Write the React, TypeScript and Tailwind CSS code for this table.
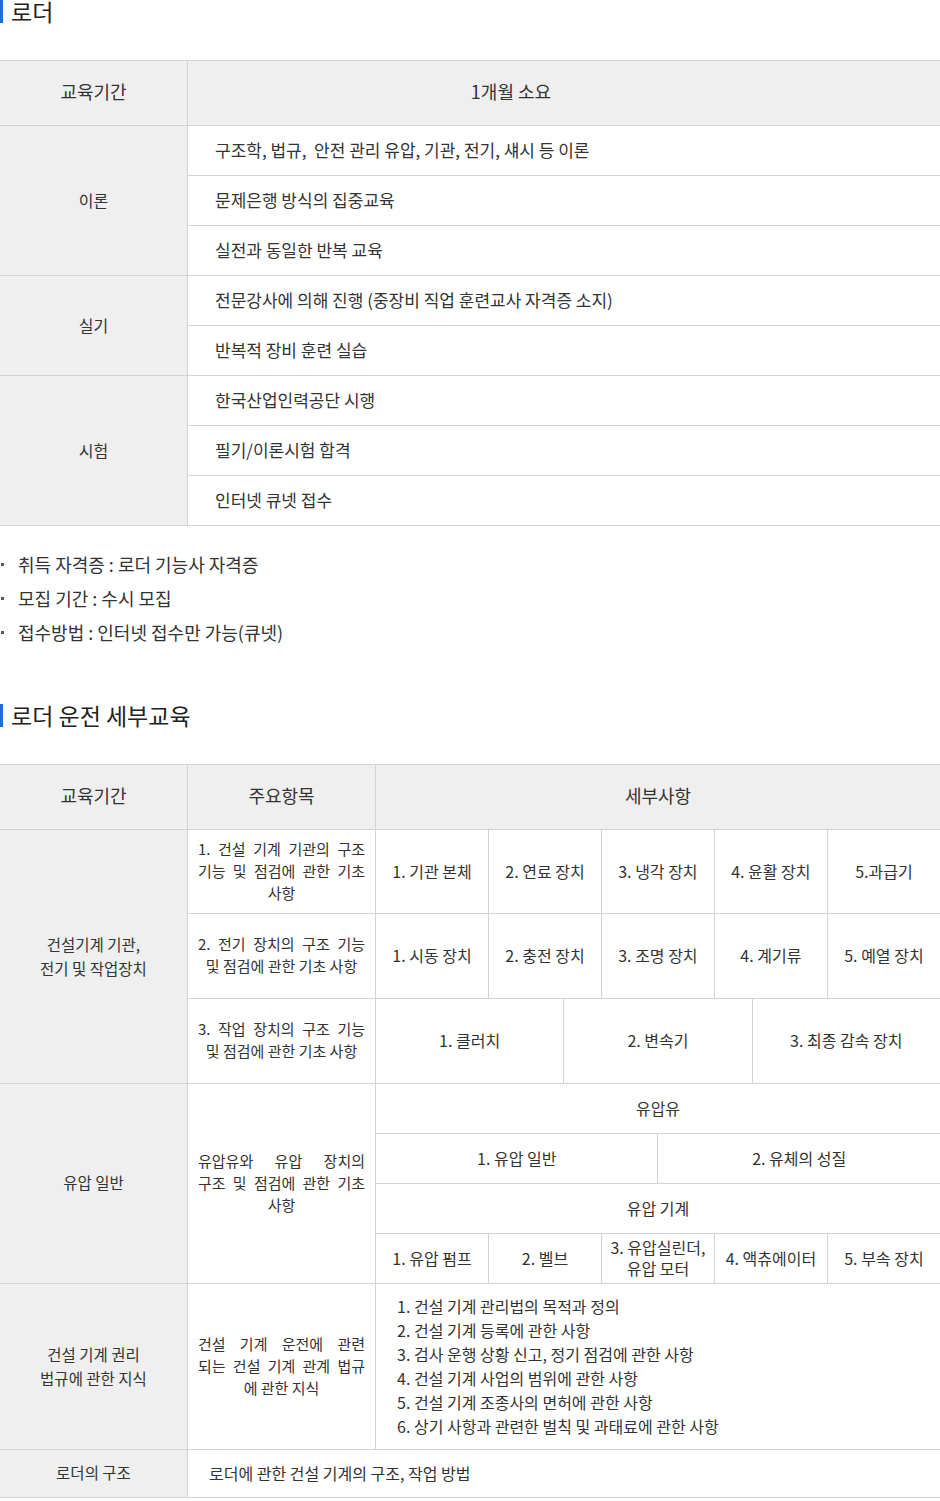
const cell = 'border border-[#d3d3d3]'
const headCell = 'border border-[#d3d3d3] bg-[#efefef] font-normal text-[18px] text-[#333] text-center pb-[3px]'
const sideCell = 'border border-[#d3d3d3] bg-[#efefef] text-center pb-[2px]'

function Heading({ children }: { children: React.ReactNode }) {
  return (
    <div className="flex items-center h-[23px]">
      <span className="w-[3px] h-[23px] bg-[#1a6fe0]" />
      <h2 className="ml-[8px] text-[23px] leading-[23px] text-[#222] font-normal">{children}</h2>
    </div>
  )
}

// justified lines, last line centered
function Justified({ lines }: { lines: string[] }) {
  return (
    <div className="px-[10px] pb-[2px] leading-[22px]">
      {lines.map((l, i) => (
        <span
          key={i}
          className={i < lines.length - 1 ? 'block text-justify [text-align-last:justify]' : 'block text-center'}
        >
          {l}
        </span>
      ))}
    </div>
  )
}

const theory = [
  { label: '이론', items: ['구조학, 법규,\u00a0 안전 관리 유압, 기관, 전기, 섀시 등 이론', '문제은행 방식의 집중교육', '실전과 동일한 반복 교육'] },
  { label: '실기', items: ['전문강사에 의해 진행 (중장비 직업 훈련교사 자격증 소지)', '반복적 장비 훈련 실습'] },
  { label: '시험', items: ['한국산업인력공단 시행', '필기/이론시험 합격', '인터넷 큐넷 접수'] },
]

const bullets = ['취득 자격증 : 로더 기능사 자격증', '모집 기간 : 수시 모집', '접수방법 : 인터넷 접수만 가능(큐넷)']

const laws = [
  '1. 건설 기계 관리법의 목적과 정의',
  '2. 건설 기계 등록에 관한 사항',
  '3. 검사 운행 상황 신고, 정기 점검에 관한 사항',
  '4. 건설 기계 사업의 범위에 관한 사항',
  '5. 건설 기계 조종사의 면허에 관한 사항',
  '6. 상기 사항과 관련한 벌칙 및 과태료에 관한 사항',
]

const centered = 'border border-[#d3d3d3] text-center text-[16px] pb-[2px]'

export default function App() {
  return (
    <div className="w-[940px] overflow-hidden bg-white font-['Noto_Sans_CJK_KR',sans-serif] text-[#333]">
      <Heading>로더</Heading>

      <table className="mt-[37px] w-[942px] -ml-px table-fixed border-collapse">
        <colgroup>
          <col className="w-[188px]" />
          <col />
        </colgroup>
        <tbody>
          <tr className="h-[65px]">
            <th className={headCell}>교육기간</th>
            <th className={headCell + ' pr-[106px]'}>1개월 소요</th>
          </tr>
          {theory.map((g) =>
            g.items.map((it, i) => (
              <tr key={g.label + i} className="h-[50px]">
                {i === 0 && (
                  <td rowSpan={g.items.length} className={sideCell + ' text-[16px]'}>
                    {g.label}
                  </td>
                )}
                <td className={cell + ' pl-[27px] pb-[2px] text-[17px]'}>{it}</td>
              </tr>
            ))
          )}
        </tbody>
      </table>

      <ul className="mt-[21px] text-[18px] leading-[34px] text-[#333]">
        {bullets.map((b) => (
          <li key={b} className="flex items-center">
            <span className="ml-[1px] w-[3px] h-[3px] bg-[#555]" />
            <span className="ml-[14px]">{b}</span>
          </li>
        ))}
      </ul>

      <div className="mt-[55px]">
        <Heading>로더 운전 세부교육</Heading>
      </div>

      <table className="mt-[37px] w-[942px] -ml-px table-fixed border-collapse text-[15px]">
        <colgroup>
          <col className="w-[188px]" />
          <col className="w-[188px]" />
          {Array.from({ length: 30 }).map((_, i) => (
            <col key={i} />
          ))}
        </colgroup>
        <tbody>
          <tr className="h-[65px]">
            <th className={headCell}>교육기간</th>
            <th className={headCell}>주요항목</th>
            <th colSpan={30} className={headCell}>세부사항</th>
          </tr>

          <tr className="h-[84px]">
            <td rowSpan={3} className={sideCell + ' text-[15.5px] leading-[24px]'}>
              건설기계 기관,
              <br />
              전기 및 작업장치
            </td>
            <td className={cell}>
              <Justified lines={['1. 건설 기계 기관의 구조', '기능 및 점검에 관한 기초', '사항']} />
            </td>
            {['1. 기관 본체', '2. 연료 장치', '3. 냉각 장치', '4. 윤활 장치', '5.과급기'].map((t) => (
              <td key={t} colSpan={6} className={centered}>{t}</td>
            ))}
          </tr>
          <tr className="h-[85px]">
            <td className={cell}>
              <Justified lines={['2. 전기 장치의 구조 기능', '및 점검에 관한 기초 사항']} />
            </td>
            {['1. 시동 장치', '2. 충전 장치', '3. 조명 장치', '4. 계기류', '5. 예열 장치'].map((t) => (
              <td key={t} colSpan={6} className={centered}>{t}</td>
            ))}
          </tr>
          <tr className="h-[85px]">
            <td className={cell}>
              <Justified lines={['3. 작업 장치의 구조 기능', '및 점검에 관한 기초 사항']} />
            </td>
            {['1. 클러치', '2. 변속기', '3. 최종 감속 장치'].map((t) => (
              <td key={t} colSpan={10} className={centered}>{t}</td>
            ))}
          </tr>

          <tr className="h-[50px]">
            <td rowSpan={4} className={sideCell + ' text-[15.5px]'}>유압 일반</td>
            <td rowSpan={4} className={cell}>
              <Justified lines={['유압유와 유압 장치의', '구조 및 점검에 관한 기초', '사항']} />
            </td>
            <td colSpan={30} className={centered}>유압유</td>
          </tr>
          <tr className="h-[50px]">
            <td colSpan={15} className={centered}>1. 유압 일반</td>
            <td colSpan={15} className={centered}>2. 유체의 성질</td>
          </tr>
          <tr className="h-[50px]">
            <td colSpan={30} className={centered}>유압 기계</td>
          </tr>
          <tr className="h-[50px]">
            <td colSpan={6} className={centered}>1. 유압 펌프</td>
            <td colSpan={6} className={centered}>2. 벨브</td>
            <td colSpan={6} className={centered + ' leading-[21px]'}>
              3. 유압실린더,
              <br />
              유압 모터
            </td>
            <td colSpan={6} className={centered}>4. 액츄에이터</td>
            <td colSpan={6} className={centered}>5. 부속 장치</td>
          </tr>

          <tr className="h-[166px]">
            <td className={sideCell + ' text-[15.5px] leading-[24px]'}>
              건설 기계 권리
              <br />
              법규에 관한 지식
            </td>
            <td className={cell}>
              <Justified lines={['건설 기계 운전에 관련', '되는 건설 기계 관계 법규', '에 관한 지식']} />
            </td>
            <td colSpan={30} className={cell + ' pl-[21px] pb-[2px] text-[16px] leading-[24px]'}>
              {laws.map((l) => (
                <div key={l}>{l}</div>
              ))}
            </td>
          </tr>
          <tr className="h-[48px]">
            <td className={sideCell + ' text-[15.5px]'}>로더의 구조</td>
            <td colSpan={31} className={cell + ' pl-[21px] pb-[2px] text-[16px]'}>로더에 관한 건설 기계의 구조, 작업 방법</td>
          </tr>
        </tbody>
      </table>
    </div>
  )
}
